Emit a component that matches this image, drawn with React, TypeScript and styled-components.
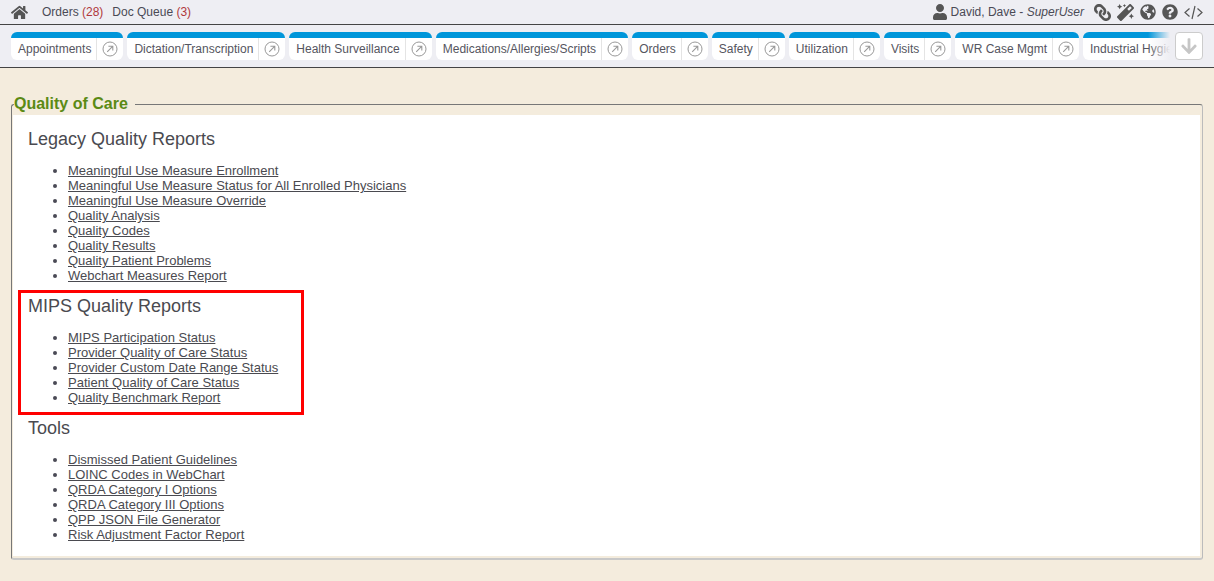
import React from "react";
import styled, { createGlobalStyle } from "styled-components";
import { FaHome, FaUser, FaLink, FaMagic, FaGlobeAmericas, FaQuestionCircle, FaArrowDown } from "react-icons/fa";

const Global = createGlobalStyle`
  html, body { margin: 0; padding: 0; background: #f4ecdd; }
  body { font-family: "Liberation Sans", Arial, sans-serif; font-size: 12px; color: #4a4a55; }
`;

const Page = styled.div`
  width: 1214px;
  height: 581px;
  overflow: hidden;
`;

const TopBar = styled.header`
  height: 24px;
  display: flex;
  align-items: center;
  justify-content: space-between;
  background: #eeeef3;
  border-bottom: 1px solid #444;
  padding: 0 11px 0 11px;
`;

const NavGroup = styled.nav`
  display: flex;
  align-items: center;
`;

const HomeLink = styled.span`
  display: flex;
  color: #555;
  font-size: 17px;
  margin-right: 14px;
`;

const NavLink = styled.span`
  margin-right: 9px;
  color: #4a4a55;
`;

const Count = styled.span`
  color: #b0383c;
`;

const UserGroup = styled.div`
  display: flex;
  align-items: center;
`;

const UserName = styled.span`
  display: flex;
  align-items: center;
  gap: 3px;
  margin-right: 10px;
  em { font-style: italic; }
`;

const UserIcon = styled.span`
  display: flex;
  color: #555;
  font-size: 16px;
`;

const Tools = styled.div`
  display: flex;
  align-items: center;
  gap: 6px;
  color: #555;
  font-size: 17px;
  svg { display: block; }
`;

const FlippedIcon = styled.span`
  display: flex;
  transform: scaleX(-1);
`;

const TabBand = styled.div`
  height: 43px;
  box-sizing: border-box;
  display: flex;
  align-items: flex-start;
  padding: 7px 11px 0;
  gap: 5px;
  background: #eeeef3;
  border-bottom: 1px solid #444;
`;

const TabStrip = styled.div`
  position: relative;
  width: 1159px;
  display: flex;
  gap: 4px;
  overflow: hidden;
  flex: none;
  &::after {
    content: "";
    position: absolute;
    top: 0;
    right: 0;
    bottom: 0;
    width: 22px;
    background: linear-gradient(to right, rgba(238, 238, 243, 0), #eeeef3);
  }
`;

const Tab = styled.div`
  flex: none;
  display: flex;
  height: 28px;
  box-sizing: border-box;
  background: #fff;
  border-top: 6px solid #0096da;
  border-radius: 6px;
`;

const TabLabel = styled.span`
  display: flex;
  align-items: center;
  padding: 0 5px 0 7px;
  color: #555560;
  white-space: nowrap;
`;

const TabAction = styled.span`
  width: 26px;
  display: flex;
  align-items: center;
  justify-content: center;
  border-left: 1px solid #e4e4e4;
  svg { display: block; }
`;

const ScrollButton = styled.button`
  flex: none;
  width: 28px;
  height: 28px;
  box-sizing: border-box;
  padding: 0;
  display: flex;
  align-items: center;
  justify-content: center;
  background: #fff;
  border: 1px solid #ccc;
  border-radius: 4px;
  color: #c6c6c6;
  font-size: 18px;
`;

const Main = styled.main`
  padding: 26px 11px 0;
`;

const Panel = styled.fieldset`
  margin: 0;
  padding: 0 2px 2px 1px;
  width: 1192px;
  box-sizing: border-box;
  border: 1px solid #777;
  border-right-color: #bbb;
  border-bottom: 2px solid #c8c8c8;
  border-radius: 3px;
  min-width: 0;
`;

const PanelLegend = styled.legend`
  padding: 0 7px 0 0;
  margin-left: 1px;
  font-size: 16px;
  line-height: 20px;
  font-weight: bold;
  color: #5b8a14;
`;

const PanelBody = styled.div`
  margin-top: 1px;
  background: #fff;
  padding: 14px 0 14px 5px;
`;

const Section = styled.section`
  padding-left: 10px;
`;

const HighlightSection = styled.section`
  width: 286px;
  box-sizing: border-box;
  margin: 7px 0 3px;
  border: 3px solid #f00;
  padding: 3px 0 7px 7px;
`;

const Heading = styled.h2`
  margin: 0;
  font-size: 18px;
  line-height: 20px;
  font-weight: normal;
  color: #4a4a50;
`;

const LinkList = styled.ul`
  margin: 14px 0 0;
  padding: 0 0 0 40px;
  font-size: 13px;
  line-height: 15px;
`;

const ReportLink = styled.a`
  color: #4a4a50;
  text-decoration: underline;
  cursor: pointer;
`;

const ArrowCircle = () => (
  <svg width="16" height="16" viewBox="0 0 16 16" fill="none" stroke="#999" strokeWidth="1">
    <circle cx="8" cy="8" r="7" />
    <path d="M5.2 10.8 L10.6 5.4 M6.4 5.2 H10.8 V9.6" strokeWidth="1.1" />
  </svg>
);

const CodeGlyph = () => (
  <svg width="19" height="15" viewBox="0 0 19 15" fill="none" stroke="#555" strokeWidth="1.2">
    <path d="M5.5 3.5 L1 7.5 L5.5 11.5 M13.5 3.5 L18 7.5 L13.5 11.5 M11 1 L8 14" />
  </svg>
);

const tabs = ["Appointments", "Dictation/Transcription", "Health Surveillance", "Medications/Allergies/Scripts", "Orders", "Safety", "Utilization", "Visits", "WR Case Mgmt", "Industrial Hygiene"];

const sectionA = ["Meaningful Use Measure Enrollment", "Meaningful Use Measure Status for All Enrolled Physicians", "Meaningful Use Measure Override", "Quality Analysis", "Quality Codes", "Quality Results", "Quality Patient Problems", "Webchart Measures Report"];
const sectionB = ["MIPS Participation Status", "Provider Quality of Care Status", "Provider Custom Date Range Status", "Patient Quality of Care Status", "Quality Benchmark Report"];
const sectionC = ["Dismissed Patient Guidelines", "LOINC Codes in WebChart", "QRDA Category I Options", "QRDA Category III Options", "QPP JSON File Generator", "Risk Adjustment Factor Report"];

const Links = ({ items }: { items: string[] }) => (
  <LinkList>
    {items.map((t) => (
      <li key={t}><ReportLink>{t}</ReportLink></li>
    ))}
  </LinkList>
);

export default function App() {
  return (
    <Page>
      <Global />
      <TopBar>
        <NavGroup>
          <HomeLink><FaHome /></HomeLink>
          <NavLink>Orders <Count>(28)</Count></NavLink>
          <NavLink>Doc Queue <Count>(3)</Count></NavLink>
        </NavGroup>
        <UserGroup>
          <UserName>
            <UserIcon><FaUser /></UserIcon>
            <span>David, Dave - <em>SuperUser</em></span>
          </UserName>
          <Tools>
            <FlippedIcon><FaLink /></FlippedIcon>
            <FaMagic />
            <FaGlobeAmericas size={16} />
            <FaQuestionCircle size={16} />
            <CodeGlyph />
          </Tools>
        </UserGroup>
      </TopBar>
      <TabBand>
        <TabStrip>
          {tabs.map((t) => (
            <Tab key={t}>
              <TabLabel>{t}</TabLabel>
              <TabAction><ArrowCircle /></TabAction>
            </Tab>
          ))}
        </TabStrip>
        <ScrollButton aria-label="Scroll down"><FaArrowDown /></ScrollButton>
      </TabBand>
      <Main>
        <Panel>
          <PanelLegend>Quality of Care</PanelLegend>
          <PanelBody>
            <Section>
              <Heading>Legacy Quality Reports</Heading>
              <Links items={sectionA} />
            </Section>
            <HighlightSection>
              <Heading>MIPS Quality Reports</Heading>
              <Links items={sectionB} />
            </HighlightSection>
            <Section>
              <Heading>Tools</Heading>
              <Links items={sectionC} />
            </Section>
          </PanelBody>
        </Panel>
      </Main>
    </Page>
  );
}
